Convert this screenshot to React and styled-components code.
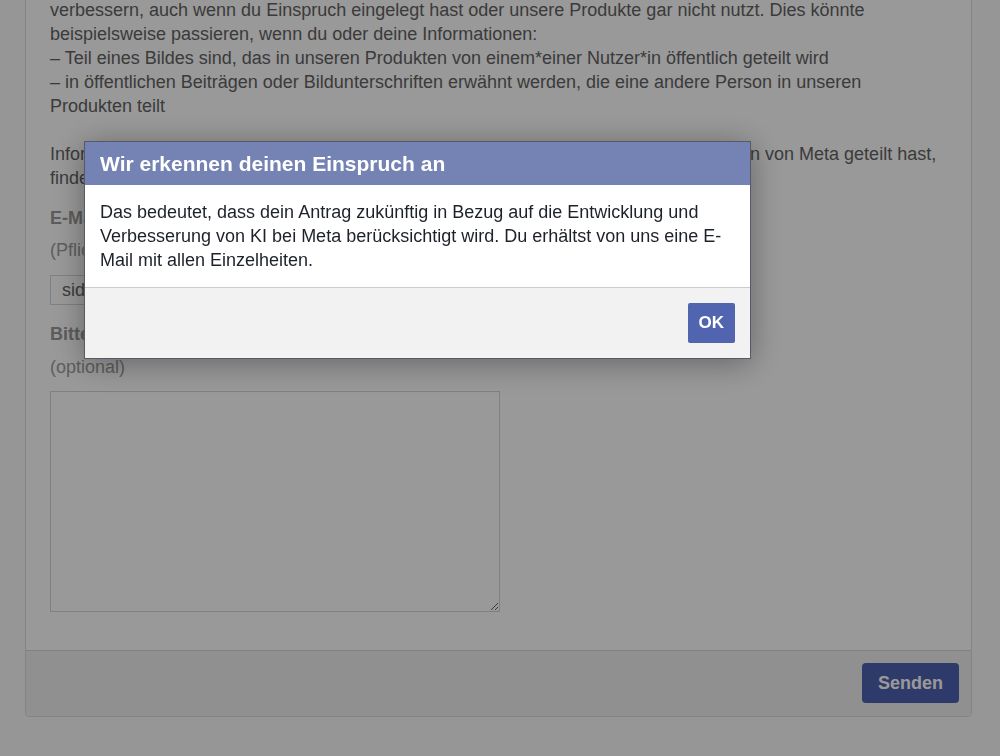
import React from 'react'
import styled, { createGlobalStyle } from 'styled-components'

const GlobalStyle = createGlobalStyle`
  html, body {
    margin: 0;
    padding: 0;
    background: #fbfbfb;
    font-family: "Liberation Sans", Arial, sans-serif;
    overflow: hidden;
  }
`

function App() {
  return (
    <>
      <GlobalStyle />
      <StPage>
        <StCard>
          <StContent>
            <StParagraph>
              verbessern, auch wenn du Einspruch eingelegt hast oder unsere Produkte gar nicht nutzt. Dies könnte
              beispielsweise passieren, wenn du oder deine Informationen:
              <br />– Teil eines Bildes sind, das in unseren Produkten von einem*einer Nutzer*in öffentlich geteilt wird
              <br />– in öffentlichen Beiträgen oder Bildunterschriften erwähnt werden, die eine andere Person in unseren
              Produkten teilt
            </StParagraph>
            <StParagraph>
              Informationen dazu wie du Zugriff auf die Informationen erhältst, die du mit KI-Funktionen von Meta geteilt hast,
              findest du in unserer Datenschutzrichtlinie.
            </StParagraph>

            <StLabel top='16px'>E-Mail-Adresse</StLabel>
            <StHint top='8px'>(Pflichtfeld)</StHint>
            <StInput defaultValue='sidney.mueller@example.com' />

            <StLabel top='17px'>Bitte erläutere, wie sich die Verarbeitung auf dich auswirkt</StLabel>
            <StHint top='9px'>(optional)</StHint>
            <StTextarea />
          </StContent>
          <StCardFooter>
            <StSendButton>Senden</StSendButton>
          </StCardFooter>
        </StCard>
      </StPage>

      <StOverlay>
        <StDialog>
          <StDialogHeader>Wir erkennen deinen Einspruch an</StDialogHeader>
          <StDialogBody>
            Das bedeutet, dass dein Antrag zukünftig in Bezug auf die Entwicklung und
            Verbesserung von KI bei Meta berücksichtigt wird. Du erhältst von uns eine E-Mail
            mit allen Einzelheiten.
          </StDialogBody>
          <StDialogFooter>
            <StOkButton>OK</StOkButton>
          </StDialogFooter>
        </StDialog>
      </StOverlay>
    </>
  )
}

export default App

const StPage = styled.div`
  padding: 0 28px 40px 25px;
`

const StCard = styled.div`
  margin-top: -31px;
  background: #fff;
  border: 1px solid #dcdcdc;
  border-radius: 4px;
`

const StContent = styled.div`
  padding: 28px 24px 38px 24px;
  color: #636363;
  font-size: 18px;
  line-height: 24px;
`

const StParagraph = styled.p`
  margin: 0 0 24px 0;
  &:nth-of-type(2) {
    margin-bottom: 0;
  }
`

const StLabel = styled.div`
  margin-top: ${({ top }) => top};
  font-weight: bold;
  color: #9a9a9a;
`

const StHint = styled.div`
  margin-top: ${({ top }) => top};
  color: #9d9d9d;
`

const StInput = styled.input`
  display: block;
  box-sizing: border-box;
  margin-top: 13px;
  width: 450px;
  height: 30px;
  padding: 0 11px;
  border: 1px solid #d5d5d5;
  background: #fff;
  font-family: inherit;
  font-size: 18px;
  color: #636363;
`

const StTextarea = styled.textarea`
  display: block;
  box-sizing: border-box;
  margin-top: 12px;
  width: 450px;
  height: 221px;
  border: 1px solid #d5d5d5;
  background: #fff;
  resize: both;
`

const StCardFooter = styled.div`
  display: flex;
  justify-content: flex-end;
  padding: 12px 12px 13px;
  border-top: 1px solid #d8d8d8;
  background: #eef1ef;
  border-radius: 0 0 4px 4px;
`

const StSendButton = styled.button`
  height: 40px;
  padding: 0 16px;
  border: none;
  border-radius: 4px;
  background: #4d61b1;
  color: #fff;
  font-family: inherit;
  font-weight: bold;
  font-size: 18px;
`

const StOverlay = styled.div`
  position: fixed;
  inset: 0;
  background: rgba(0, 0, 0, 0.4);
`

const StDialog = styled.div`
  position: absolute;
  top: 141px;
  left: 84px;
  width: 665px;
  border: 1px solid #555a66;
  background: #fff;
  box-shadow: 0 4px 30px rgba(0, 0, 0, 0.35);
`

const StDialogHeader = styled.div`
  height: 43px;
  line-height: 43px;
  padding: 0 15px;
  background: #7482b4;
  color: #fff;
  font-size: 21px;
  font-weight: bold;
`

const StDialogBody = styled.div`
  padding: 15px 16px 15px 15px;
  color: #1d2129;
  font-size: 18px;
  line-height: 24px;
  border-bottom: 1px solid #cccccc;
`

const StDialogFooter = styled.div`
  display: flex;
  justify-content: flex-end;
  padding: 15px 15px;
  background: #f2f2f2;
`

const StOkButton = styled.button`
  height: 40px;
  padding: 0 11px;
  border: none;
  border-radius: 2px;
  background: #5064b0;
  color: #fff;
  font-family: inherit;
  font-size: 17px;
  font-weight: bold;
`
